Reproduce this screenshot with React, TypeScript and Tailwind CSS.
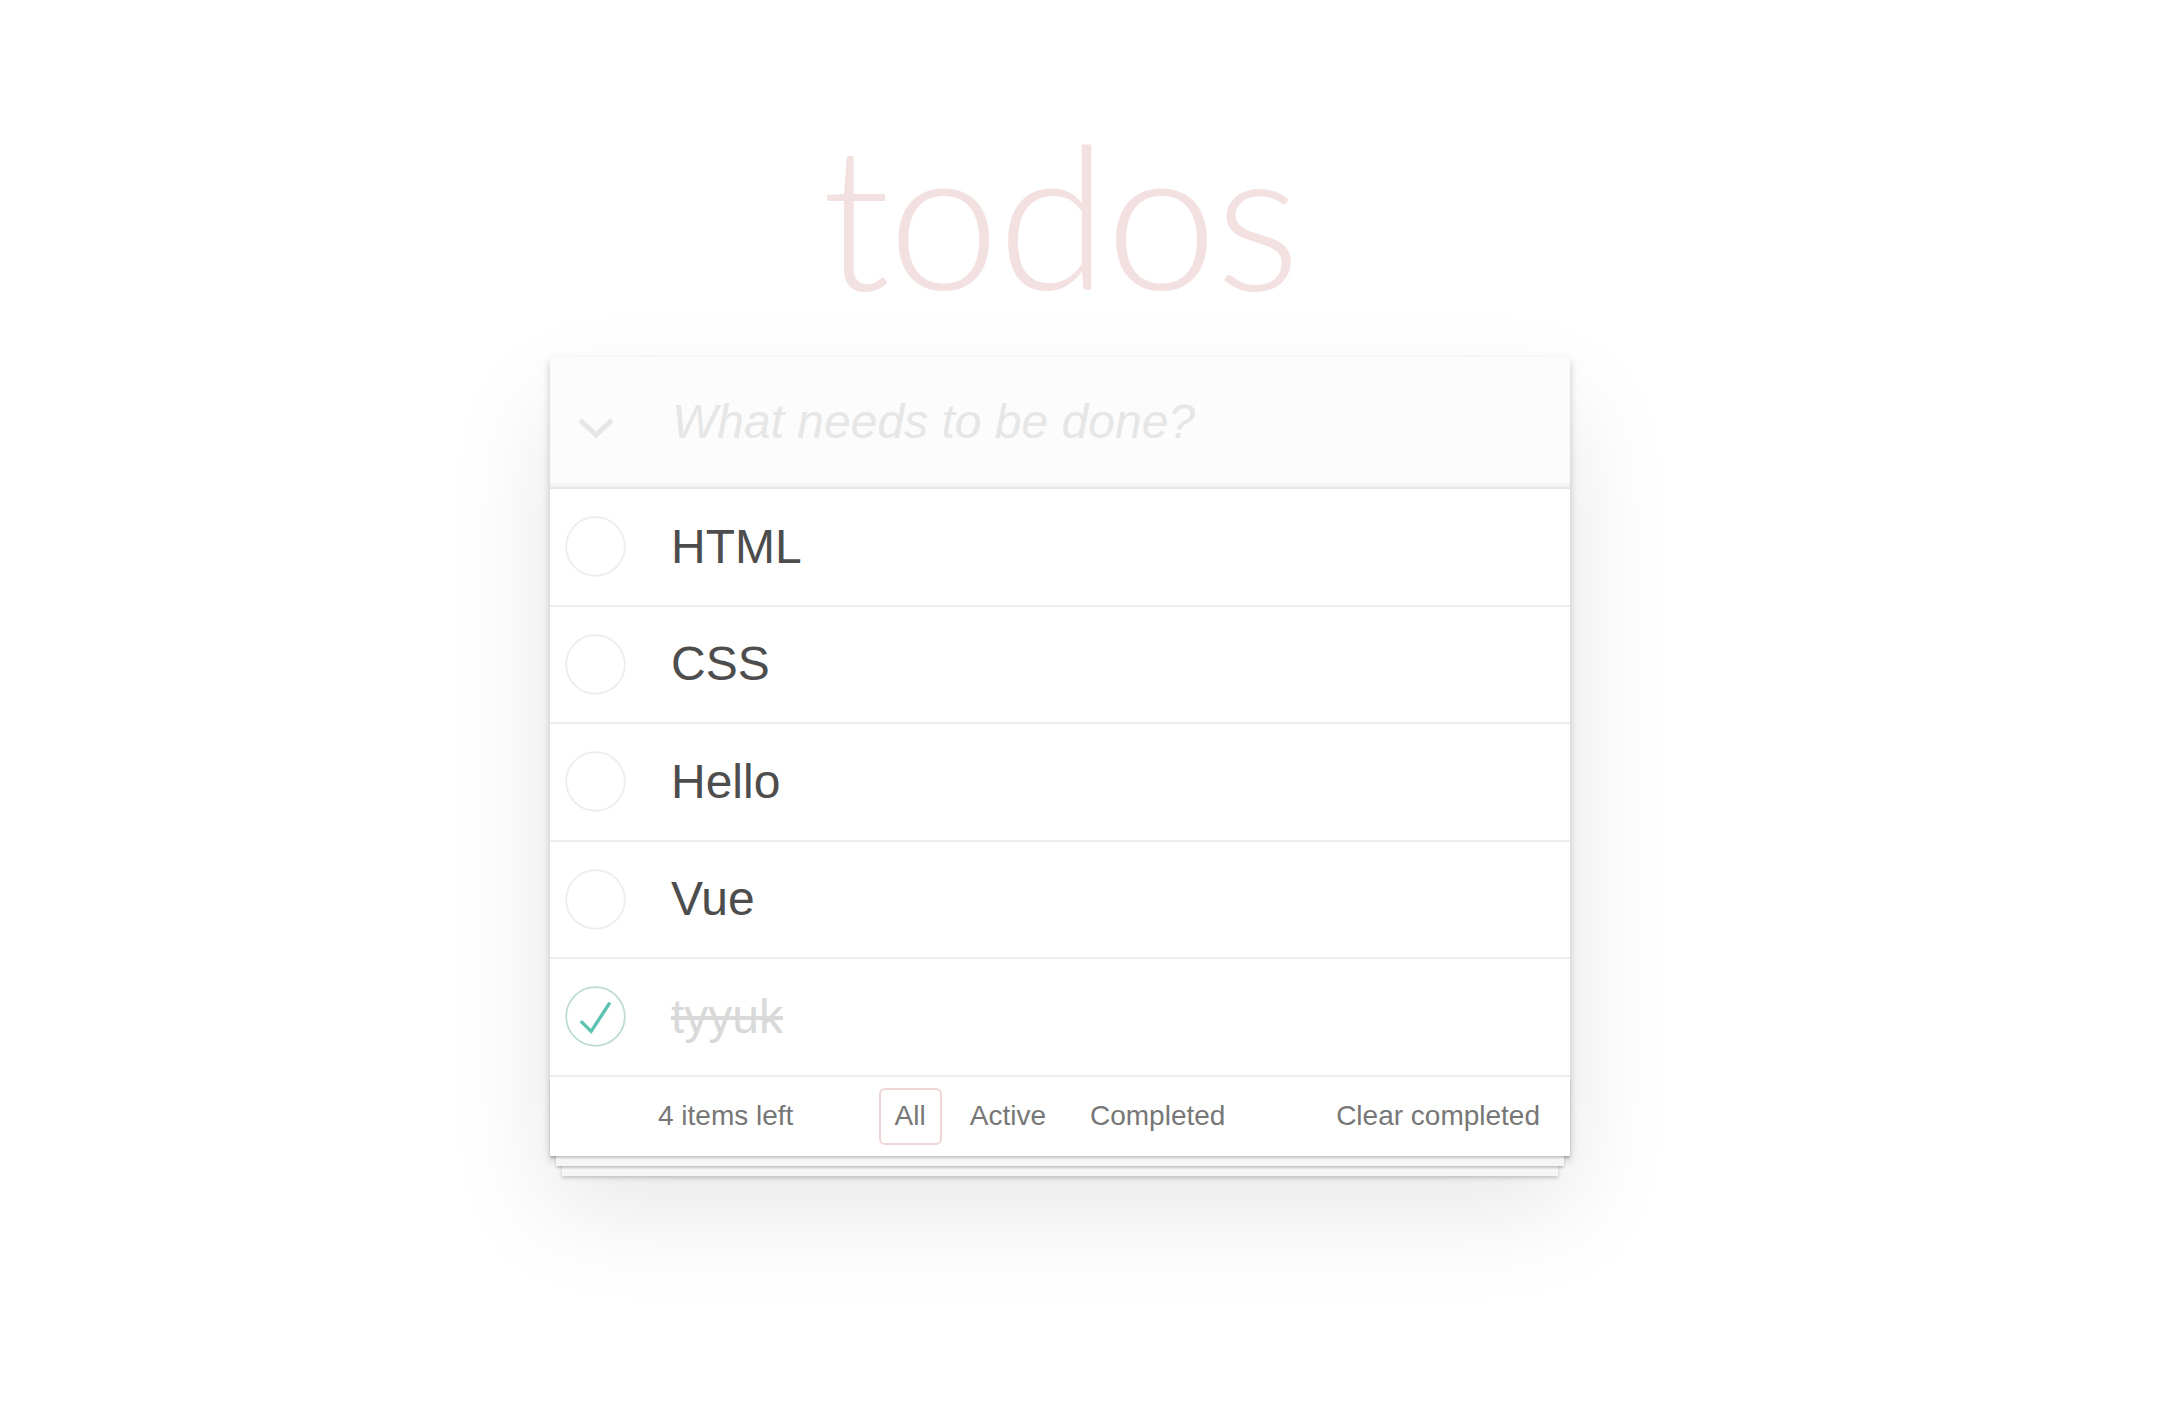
import React from 'react';

type Todo = { title: string; done: boolean };

const todos: Todo[] = [
  { title: 'HTML', done: false },
  { title: 'CSS', done: false },
  { title: 'Hello', done: false },
  { title: 'Vue', done: false },
  { title: 'tyyuk', done: true },
];

function Toggle({ done }: { done: boolean }) {
  return (
    <svg width="61" height="61" viewBox="-2 -2 104 104" className="shrink-0 ml-[15px]">
      <circle cx="50" cy="50" r="50" fill="none" stroke={done ? '#bddad5' : '#ededed'} strokeWidth="3" />
      {done && <path d="M72 25L42 71 27 56l-4 4 20 20 34-52z" fill="#5dc2af" />}
    </svg>
  );
}

export default function App() {
  return (
    <div className="min-h-screen bg-white font-['Liberation_Sans',Arial,sans-serif]">
      <div className="ml-[550px] w-[1020px] pt-[113px] pb-[80px]">
        <h1 className="text-center text-[200px] leading-[200px] font-light tracking-[-2px] text-[rgba(175,47,47,0.15)] font-['Lato',sans-serif]">
          todos
        </h1>

        <section className="mt-[44px] bg-white shadow-[0_4px_8px_0_rgba(0,0,0,0.2),0_50px_100px_0_rgba(0,0,0,0.1)]">
          {/* new todo input */}
          <header className="h-[130px] flex items-center bg-[#fcfcfc] shadow-[inset_0_-4px_2px_rgba(0,0,0,0.03)]">
            <svg width="38" height="22" viewBox="0 0 38 22" className="ml-[27px] mt-[11px] shrink-0">
              <path d="M3 3 L19 18 L35 3" fill="none" stroke="#e6e6e6" strokeWidth="5" />
            </svg>
            <div className="ml-[57px] text-[48px] italic text-[#e6e6e6]">What needs to be done?</div>
          </header>

          <ul className="border-t-2 border-[#e6e6e6]">
            {todos.map((t) => (
              <li key={t.title} className="h-[117.5px] border-b-2 border-[#ededed] flex items-center">
                <Toggle done={t.done} />
                <span
                  className={
                    t.done
                      ? 'ml-[45px] text-[48px] text-[#d9d9d9] line-through'
                      : 'ml-[45px] text-[48px] text-[#4d4d4d]'
                  }
                >
                  {t.title}
                </span>
              </li>
            ))}
          </ul>

          <footer className="h-[79.5px] grid grid-cols-[1fr_auto_1fr] items-center text-[28px] text-[#777] bg-white shadow-[0_2px_2px_rgba(0,0,0,0.2),0_16px_0_-6px_#f6f6f6,0_18px_2px_-6px_rgba(0,0,0,0.2),0_32px_0_-12px_#f6f6f6,0_34px_4px_-12px_rgba(0,0,0,0.2)]">
            <span className="pl-[108px]">4 items left</span>
            <ul className="flex items-center">
              <li className="mx-[6px] h-[57px] px-[14px] flex items-center border-2 border-[rgba(175,47,47,0.2)] rounded-[6px]">All</li>
              <li className="mx-[6px] h-[57px] px-[14px] flex items-center border-2 border-transparent rounded-[6px]">Active</li>
              <li className="mx-[6px] h-[57px] px-[14px] flex items-center border-2 border-transparent rounded-[6px]">Completed</li>
            </ul>
            <span className="justify-self-end pr-[30px]">Clear completed</span>
          </footer>
        </section>
      </div>
    </div>
  );
}
